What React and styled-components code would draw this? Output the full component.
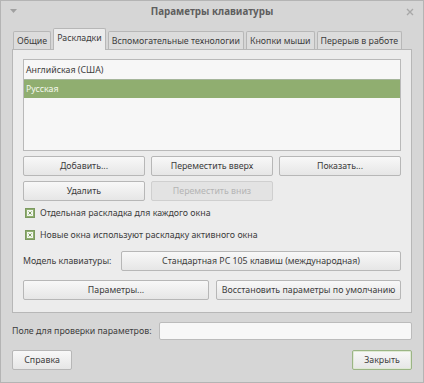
import React from 'react';
import styled, { createGlobalStyle } from 'styled-components';

const GlobalStyle = createGlobalStyle`
  html, body {
    margin: 0;
    padding: 0;
    background: #d6d6d6;
  }
  body {
    font-family: 'Noto Sans', 'DejaVu Sans', sans-serif;
    font-size: 8.8px;
    color: #3c3c3c;
  }
`;

const Window = styled.div`
  width: 424px;
  height: 383px;
  box-sizing: border-box;
  background: #d6d6d6;
  border: 1px solid #b4b4b4;
  display: flex;
  flex-direction: column;
`;

const TitleBar = styled.div`
  height: 21px;
  display: flex;
  align-items: center;
  justify-content: space-between;
  padding: 0 9px 0 9px;
  position: relative;
`;

const Title = styled.div`
  position: absolute;
  left: 0;
  right: 0;
  text-align: center;
  font-size: 9.8px;
  font-weight: bold;
  color: #5e5e5e;
`;

const Body = styled.div`
  flex: 1;
  padding: 5px 11px 0 11px;
  display: flex;
  flex-direction: column;
`;

const Tabs = styled.div`
  display: flex;
  align-items: flex-end;
  gap: 2px;
  height: 22px;
  padding-left: 1px;
`;

const Tab = styled.div`
  height: ${p => (p.$active ? '22px' : '18px')};
  box-sizing: border-box;
  padding: 0 3px;
  display: flex;
  align-items: center;
  white-space: nowrap;
  border: 1px solid #b7b7b7;
  border-bottom: none;
  border-radius: 2px 2px 0 0;
  background: ${p => (p.$active ? '#ececec' : '#dcdcdc')};
  color: #3c3c3c;
  margin-bottom: ${p => (p.$active ? '-1px' : '0')};
  padding-bottom: ${p => (p.$active ? '3px' : '0')};
  position: relative;
  z-index: ${p => (p.$active ? 1 : 0)};
`;

const Panel = styled.div`
  height: 264px;
  box-sizing: border-box;
  background: #ececec;
  border: 1px solid #b7b7b7;
  padding: 9px 10px 0 10px;
  display: flex;
  flex-direction: column;
`;

const List = styled.div`
  height: 92px;
  box-sizing: border-box;
  background: #f7f7f7;
  border: 1px solid #b9b9b9;
`;

const Row = styled.div`
  height: 18px;
  display: flex;
  align-items: center;
  padding-left: 2px;
  background: ${p => (p.$selected ? '#90ae70' : 'transparent')};
  color: ${p => (p.$selected ? '#f4f8ee' : '#3c3c3c')};
  border-top: 1px solid ${p => (p.$selected ? '#a5b59a' : 'transparent')};
`;

const Grid = styled.div`
  display: grid;
  grid-template-columns: repeat(3, 1fr);
  gap: 5px 6px;
  margin-top: 5px;
`;

const Button = styled.div`
  height: ${p => p.$h || 20}px;
  box-sizing: border-box;
  display: flex;
  align-items: center;
  justify-content: center;
  border: 1px solid ${p => (p.$default ? '#9bb585' : p.$disabled ? '#cfcfcf' : '#b7b7b7')};
  border-radius: 2px;
  background: ${p =>
    p.$disabled ? '#e3e3e3' : 'linear-gradient(#f8f8f8, #e6e6e6)'};
  color: ${p => (p.$disabled ? '#b4b4b4' : '#3c3c3c')};
  box-shadow: ${p => (p.$default ? 'inset 0 0 0 1px #dfe9d4' : 'none')};
  white-space: nowrap;
  width: ${p => (p.$w ? p.$w + 'px' : 'auto')};
`;

const Check = styled.div`
  display: flex;
  align-items: center;
  gap: 5px;
  padding-left: 2px;
  height: 22px;
`;

const CheckBox = styled.div`
  width: 10px;
  height: 10px;
  box-sizing: border-box;
  background: #8fae70;
  border: 1px solid #7c9a60;
  display: flex;
  align-items: center;
  justify-content: center;
`;

const ModelRow = styled.div`
  display: flex;
  align-items: center;
  margin-top: 5px;
`;

const Label = styled.div`
  width: ${p => p.$w}px;
  flex-shrink: 0;
`;

const TwoCols = styled.div`
  display: grid;
  grid-template-columns: 186px 1fr;
  gap: 7px;
  margin-top: 9px;
`;

const Field = styled.div`
  display: flex;
  align-items: center;
  margin-top: 9px;
  height: 18px;
`;

const Entry = styled.div`
  flex: 1;
  height: 18px;
  box-sizing: border-box;
  background: #f7f7f7;
  border: 1px solid #bbbbbb;
  border-radius: 2px;
`;

const Footer = styled.div`
  display: flex;
  justify-content: space-between;
  margin-top: 10px;
`;

const CheckMark = () => (
  <svg width="6" height="6" viewBox="0 0 6 6">
    <rect x="0" y="0" width="6" height="6" fill="#f2f6ee" />
    <path d="M1.5 1.5 L4.5 4.5 M4.5 1.5 L1.5 4.5" stroke="#7b9a5f" strokeWidth="1" />
  </svg>
);

export default function App() {
  return (
    <>
      <GlobalStyle />
      <Window>
        <TitleBar>
          <svg width="7" height="5" viewBox="0 0 7 5">
            <path d="M0 0 L7 0 L3.5 4 Z" fill="#a0a0a0" />
          </svg>
          <Title>Параметры клавиатуры</Title>
          <svg width="8" height="8" viewBox="0 0 8 8">
            <path d="M1 1 L7 7 M7 1 L1 7" stroke="#a8a8a8" strokeWidth="1.4" />
          </svg>
        </TitleBar>
        <Body>
          <Tabs>
            <Tab>Общие</Tab>
            <Tab $active>Раскладки</Tab>
            <Tab>Вспомогательные технологии</Tab>
            <Tab>Кнопки мыши</Tab>
            <Tab>Перерыв в работе</Tab>
          </Tabs>
          <Panel>
            <List>
              <Row>Английская (США)</Row>
              <Row $selected>Русская</Row>
            </List>
            <Grid>
              <Button>Добавить...</Button>
              <Button>Переместить вверх</Button>
              <Button>Показать...</Button>
              <Button>Удалить</Button>
              <Button $disabled>Переместить вниз</Button>
            </Grid>
            <Check style={{ marginTop: 1 }}>
              <CheckBox><CheckMark /></CheckBox>
              Отдельная раскладка для каждого окна
            </Check>
            <Check>
              <CheckBox><CheckMark /></CheckBox>
              Новые окна используют раскладку активного окна
            </Check>
            <ModelRow>
              <Label $w={98}>Модель клавиатуры:</Label>
              <Button style={{ flex: 1 }}>Стандартная PC 105 клавиш (международная)</Button>
            </ModelRow>
            <TwoCols>
              <Button>Параметры...</Button>
              <Button>Восстановить параметры по умолчанию</Button>
            </TwoCols>
          </Panel>
          <Field>
            <Label $w={147}>Поле для проверки параметров:</Label>
            <Entry />
          </Field>
          <Footer>
            <Button $w={60}>Справка</Button>
            <Button $w={60} $default>Закрыть</Button>
          </Footer>
        </Body>
      </Window>
    </>
  );
}
